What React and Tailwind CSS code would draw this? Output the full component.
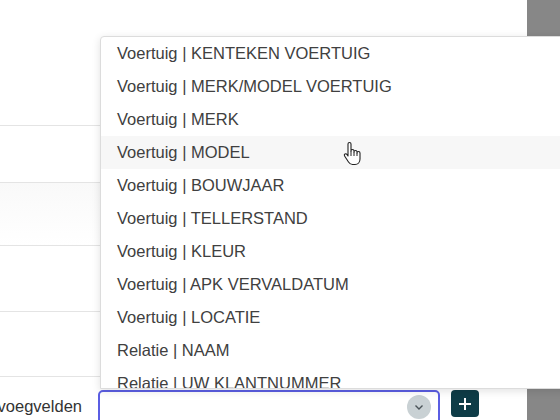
import React from "react";

const options = [
  "Voertuig | KENTEKEN VOERTUIG",
  "Voertuig | MERK/MODEL VOERTUIG",
  "Voertuig | MERK",
  "Voertuig | MODEL",
  "Voertuig | BOUWJAAR",
  "Voertuig | TELLERSTAND",
  "Voertuig | KLEUR",
  "Voertuig | APK VERVALDATUM",
  "Voertuig | LOCATIE",
  "Relatie | NAAM",
  "Relatie | UW KLANTNUMMER",
];

function HandCursor() {
  return (
    <svg width="20" height="26" viewBox="0 0 20 26" className="absolute left-[343px] top-[141px]">
      <path
        d="M5 3a1.5 1.5 0 0 1 3 0V10a1.5 1.5 0 0 1 3 0V11a1.5 1.5 0 0 1 3 0V12a1.5 1.5 0 0 1 3 0V18c0 3-2 5.5-5 5.5H9.5c-2 0-3-1-4-2.5L1.6 15a1.4 1.4 0 0 1 2.3-1.6L5 15Z"
        fill="#fff"
        stroke="#222"
        strokeWidth="1.1"
        strokeLinejoin="round"
      />
      <path d="M8 10V15M11 11V15M14 12V15" stroke="#222" strokeWidth="1" />
    </svg>
  );
}

export default function App() {
  return (
    <div
      className="relative w-[560px] h-[420px] overflow-hidden bg-white text-[#404040]"
      style={{ fontFamily: '"Liberation Sans", Arial, sans-serif' }}
    >
      <div className="flex h-full">
        <div className="flex-1 flex flex-col">
          <div className="shrink-0 h-[126px] border-b border-[#e4e4e4]" />
          <div className="shrink-0 h-[57px] border-b border-[#e4e4e4]" />
          <div className="shrink-0 h-[63px] border-b border-[#e4e4e4] bg-gradient-to-b from-[#f9f9f9] to-white" />
          <div className="shrink-0 h-[66px] border-b border-[#e4e4e4]" />
          <div className="shrink-0 h-[65px] border-b border-[#e4e4e4]" />
          <div className="shrink-0 flex items-start pt-[13px]">
            <div className="w-[82px] flex justify-end overflow-hidden whitespace-nowrap text-[16.5px] leading-[32px] text-[#333]">
              Samenvoegvelden
            </div>
            <div className="ml-[16px] w-[342px] h-[36px] rounded-[5px] border-2 border-[#5b5ee3] flex items-start justify-end pr-[7px] pt-[3px]">
              <div className="w-[24px] h-[24px] rounded-full bg-[#c9d1d4] flex items-center justify-center">
                <svg width="12" height="12" viewBox="0 0 12 12">
                  <path d="M2.5 4.5L6 8l3.5-3.5" fill="none" stroke="#4a5358" strokeWidth="1.4" />
                </svg>
              </div>
            </div>
            <button className="ml-[11px] w-[28px] h-[27px] rounded-[4px] bg-[#0e3c47] flex items-center justify-center">
              <svg width="14" height="14" viewBox="0 0 14 14">
                <path d="M7 1V13M1 7H13" stroke="#fff" strokeWidth="2" />
              </svg>
            </button>
          </div>
        </div>
        <div className="w-[33px] bg-[#878787]" />
      </div>

      <div className="absolute left-[100px] top-[36px] w-[480px] h-[353px] overflow-hidden bg-white border border-[#dcdcdc] rounded-tl-[4px] shadow-[0_2px_8px_rgba(0,0,0,0.12)]">
        {options.map((o, i) => (
          <div
            key={o}
            className={`h-[33px] flex items-center px-[16px] text-[16.5px] whitespace-nowrap ${i === 3 ? "bg-[#f7f7f7]" : ""}`}
          >
            {o}
          </div>
        ))}
      </div>
      <HandCursor />
    </div>
  );
}
